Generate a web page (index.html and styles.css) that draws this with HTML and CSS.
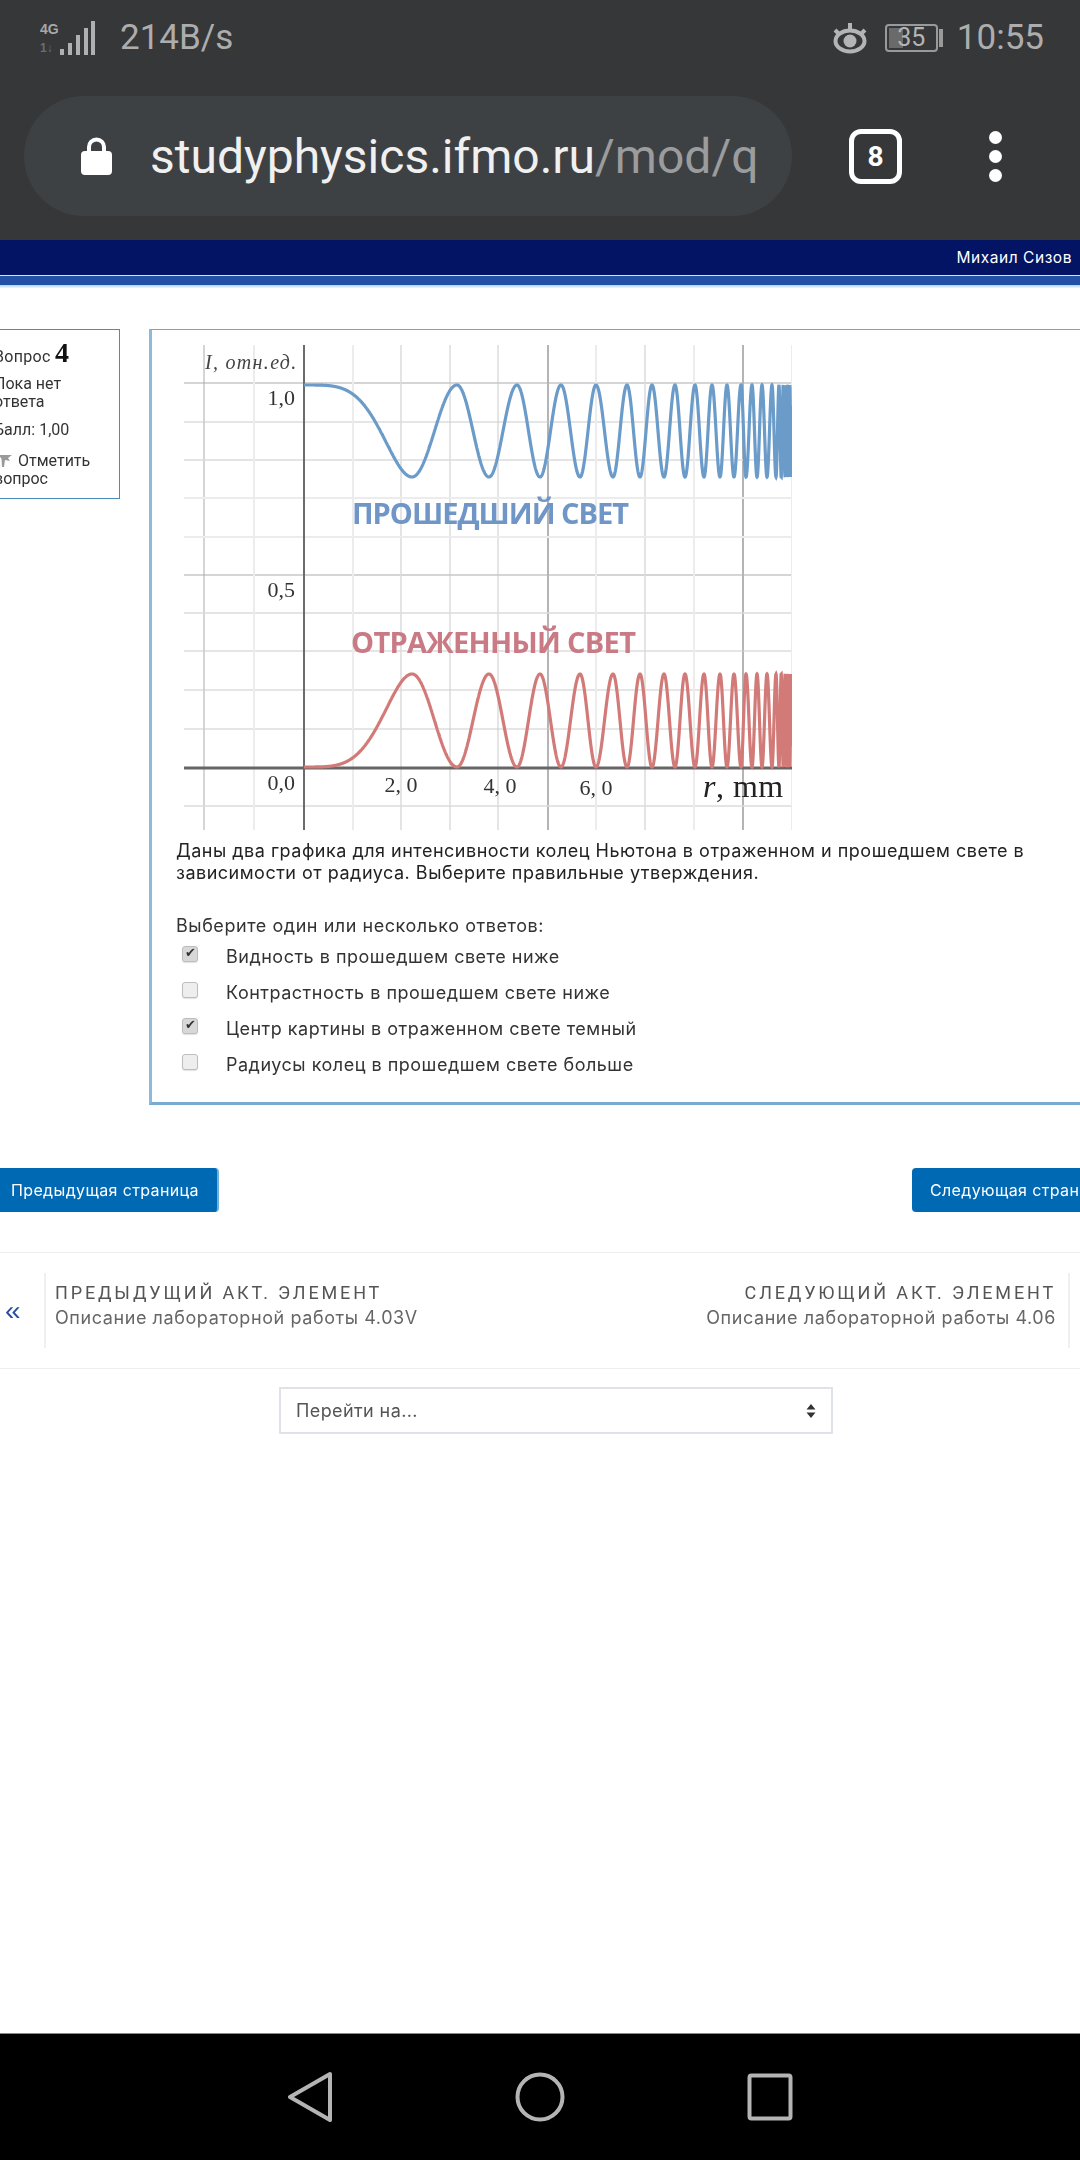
FILE: index.html
```html
<!DOCTYPE html>
<html lang="ru">
<head>
<meta charset="utf-8">
<title>Вопрос 4</title>
<link rel="stylesheet" href="styles.css">
</head>
<body>
<header class="chrome">
  <div class="status">
    <div class="status-left">
      <svg class="signal" viewBox="0 0 56 36" width="56" height="36">
        <text x="0" y="14" class="net">4G</text>
        <text x="0" y="32" class="net dim">1↓</text>
        <path class="bars" d="M20 29h4v6h-4zM28 23h4v12h-4zM36 15h4v20h-4zM44 8h4v27h-4zM51 1h4v34h-4z"/>
      </svg>
      <span class="speed">214B/s</span>
    </div>
    <div class="status-right">
      <svg class="eye" viewBox="0 0 38 32" width="38" height="32">
        <path class="eye-lash" d="M4 8l5 5M34 8l-5 5M19 1v7"/>
        <ellipse class="eye-ring" cx="19" cy="19" rx="14.5" ry="10.5"/>
        <circle class="eye-pupil" cx="19" cy="19" r="6.5"/>
      </svg>
      <div class="battery"><span class="battery-fill"></span><span class="battery-num">35</span></div>
      <span class="battery-nub"></span>
      <span class="clock">10:55</span>
    </div>
  </div>
  <div class="toolbar">
    <div class="omnibox">
      <svg class="lock" viewBox="0 0 31 38" width="31" height="38">
        <path class="lock-bow" d="M8 18V10a7.500 7.500 0 0 1 15 0v8"/>
        <rect class="lock-body" x="0" y="14" width="31" height="24" rx="4"/>
      </svg>
      <span class="url">studyphysics.ifmo.ru<span class="url-path">/mod/q</span></span>
    </div>
    <div class="tabs">8</div>
    <div class="menu-dots"><i></i><i></i><i></i></div>
  </div>
</header>

<div class="sitebar"><span class="username">Михаил Сизов</span></div>
<div class="sitebar-rule"></div>

<main class="page">
  <div class="layout">
    <aside class="qinfo">
      <h3 class="qno">Вопрос <b>4</b></h3>
      <div class="qstate">Пока нет ответа</div>
      <div class="qgrade">Балл: 1,00</div>
      <div class="qflag">
        <svg class="flag" viewBox="0 0 14 14" width="14" height="14"><path d="M0 1h13l-4 3 2 3-5-1-1 7H3L2.500 5z"/></svg>
        Отметить вопрос
      </div>
    </aside>
    <section class="qcontent">
      <svg class="chart" viewBox="184 345 608 485" width="608" height="485">
        <path class="g1" d="M184 383H792M184 575H792M204 345V830"/>
        <path class="g5" d="M548 345V830M743 345V830"/>
        <path class="g2" d="M184 422H792M184 651H792M184 690H792M184 729H792M450 345V830M498 345V830"/>
        <path class="g3" d="M184 460H792M184 613H792M184 806H792M401 345V830M645 345V830"/>
        <path class="g4" d="M184 498H792M184 537H792M254 345V830M353 345V830M596 345V830M694 345V830M792 345V830"/>
        <path class="axis-y" d="M304 345V830"/>
        <path class="axis-x" d="M184 768H792"/>
        <path id="curve-t" class="curve-t"/>
        <path id="curve-r" class="curve-r"/>
        <text class="tick" x="295" y="405" text-anchor="end">1,0</text>
        <text class="tick" x="295" y="597" text-anchor="end">0,5</text>
        <text class="tick" x="295" y="790" text-anchor="end">0,0</text>
        <text class="tick" x="401" y="792" text-anchor="middle">2, 0</text>
        <text class="tick" x="500" y="793" text-anchor="middle">4, 0</text>
        <text class="tick" x="596" y="795" text-anchor="middle">6, 0</text>
        <text class="ylab" x="205" y="369">I, отн.ед.</text>
        <text class="xlab" x="703" y="797"><tspan class="xlab-r">r</tspan>, mm</text>
        <text class="lab-t" x="352" y="524">ПРОШЕДШИЙ СВЕТ</text>
        <text class="lab-r" x="351" y="653">ОТРАЖЕННЫЙ СВЕТ</text>
      </svg>
      <p class="qtext">Даны два графика для интенсивности колец Ньютона в отраженном и прошедшем свете в зависимости от радиуса. Выберите правильные утверждения.</p>
      <p class="prompt">Выберите один или несколько ответов:</p>
      <ul class="answers">
        <li class="answer"><span class="cb on"></span>Видность в прошедшем свете ниже</li>
        <li class="answer"><span class="cb"></span>Контрастность в прошедшем свете ниже</li>
        <li class="answer"><span class="cb on"></span>Центр картины в отраженном свете темный</li>
        <li class="answer"><span class="cb"></span>Радиусы колец в прошедшем свете больше</li>
      </ul>
    </section>
  </div>

  <div class="pager">
    <a class="btn btn-prev">Предыдущая страница</a>
    <a class="btn btn-next">Следующая страница</a>
  </div>

  <nav class="activity">
    <div class="act-side">
      <span class="act-arrow">«</span>
      <div class="act-body">
        <div class="act-title">ПРЕДЫДУЩИЙ АКТ. ЭЛЕМЕНТ</div>
        <div class="act-name">Описание лабораторной работы 4.03V</div>
      </div>
    </div>
    <div class="act-side act-right">
      <div class="act-body">
        <div class="act-title">СЛЕДУЮЩИЙ АКТ. ЭЛЕМЕНТ</div>
        <div class="act-name">Описание лабораторной работы 4.06</div>
      </div>
    </div>
  </nav>

  <div class="jump">
    <span>Перейти на...</span>
    <svg class="updown" viewBox="0 0 10 14" width="10" height="14"><path d="M5 0l4.500 5.500h-9zM5 14L.5 8.500h9z"/></svg>
  </div>
</main>

<footer class="navbar">
  <svg class="nav-icon" viewBox="0 0 46 50" width="46" height="50"><path d="M43 2L3 25l40 23z"/></svg>
  <svg class="nav-icon" viewBox="0 0 50 50" width="50" height="50"><circle cx="25" cy="25" r="22.500"/></svg>
  <svg class="nav-icon" viewBox="0 0 46 48" width="46" height="48"><rect x="2.500" y="2.500" width="41" height="43" rx="2"/></svg>
</footer>
<script src="chart.js"></script>
</body>
</html>
```
FILE: styles.css
```css
* { box-sizing: border-box; }
html, body { margin: 0; padding: 0; }
body {
  width: 1080px; height: 2160px; overflow: hidden;
  display: flex; flex-direction: column;
  background: #fff; color: #222;
  font-family: Roboto, "Noto Sans", sans-serif;
}

/* browser chrome */
.chrome { height: 240px; background: #363739; flex: none; padding: 0 24px; }
.status { height: 96px; display: flex; justify-content: space-between; align-items: flex-start; padding-top: 18px; }
.status-left { display: flex; align-items: center; margin-left: 16px; gap: 24px; color: #adadad; }
.signal { display: block; }
.net { font: 700 14px "Liberation Sans", sans-serif; fill: #a8a8a8; }
.net.dim { fill: #6c6c6c; font-size: 12px; }
.bars { fill: #b0b0b0; }
.speed { font-size: 35px; line-height: 40px; }
.status-right { display: flex; align-items: center; margin-right: 12px; color: #adadad; }
.eye { margin-right: 16px; }
.eye-lash, .eye-ring { fill: none; stroke: #b4b4b4; stroke-width: 4; }
.eye-pupil { fill: #b4b4b4; }
.battery { position: relative; width: 53px; height: 28px; border: 2px solid #9a9a9a; border-radius: 4px; display: flex; align-items: center; justify-content: center; }
.battery-fill { position: absolute; left: 2px; top: 2px; bottom: 2px; width: 14px; background: #6a6a6a; }
.battery-num { position: relative; font-size: 25px; line-height: 24px; color: #b4b4b4; }
.battery-nub { width: 4px; height: 18px; background: #9a9a9a; margin: 0 14px 0 1px; }
.clock { font-size: 35px; line-height: 40px; }

.toolbar { display: flex; align-items: center; height: 120px; }
.omnibox { width: 768px; height: 120px; border-radius: 60px; background: #3e4143; display: flex; align-items: center; padding-left: 57px; gap: 38px; }
.lock-bow { fill: none; stroke: #fff; stroke-width: 4; }
.lock-body { fill: #fff; }
.url { font-size: 48px; line-height: 60px; padding-top: 2px; color: #f0f0f0; white-space: nowrap; }
.url-path { color: #9a9c9e; }
.tabs { width: 53px; height: 55px; margin-left: 57px; border: 5px solid #fff; border-radius: 12px; color: #fff; font-size: 28px; font-weight: 700; display: flex; align-items: center; justify-content: center; }
.menu-dots { margin-left: 87px; display: flex; flex-direction: column; gap: 6px; }
.menu-dots i { display: block; width: 13px; height: 13px; border-radius: 50%; background: #fff; }

/* site header */
.sitebar { height: 35px; flex: none; background: #021463; display: flex; justify-content: flex-end; align-items: center; padding-right: 8px; }
.username { color: #fff; font: 15.5px Inter, Roboto, sans-serif; letter-spacing: .55px; }
.sitebar-rule { height: 13px; flex: none; border-top: 1px solid #d8e4f4; background: linear-gradient(#2350a5 0 9px, #a9d4ef 9px, #eef7fb 12px); }

/* page */
.page { flex: 1; overflow: hidden; min-height: 0; padding-top: 41px; }
.layout { display: flex; align-items: flex-start; gap: 29px; margin-left: -20px; width: 1200px; filter: blur(.35px); }

.qinfo { width: 140px; height: 170px; border: 1px solid #4a8db8; padding: 7px 0 0 13px; font-size: 16px; line-height: 18px; color: #333; flex: none; }
.qno { margin: 0; font-size: 16px; font-weight: 400; line-height: 30px; letter-spacing: .3px; }
.qno b { font: 700 28px "Liberation Serif", serif; color: #111; }
.qstate { margin-top: 3px; width: 90px; }
.qgrade { margin-top: 10px; }
.qflag { margin-top: 13px; }
.flag { vertical-align: -2px; margin: 0 1px 0 5px; }
.flag path { fill: #9a9a9a; }

.qcontent { width: 1040px; height: 776px; border: 1px solid #6da8cf; border-left: 3px solid #8bbadd; border-bottom: 3px solid #78abd2; padding: 15px 0 0 24px; flex: none; }
.chart { display: block; margin-left: 8px; }
.g1, .g2, .g3, .g4, .g5, .axis-x, .axis-y, .curve-t, .curve-r { fill: none; }
.g1 { stroke: #ababab; stroke-width: 1; }
.g5 { stroke: #b4b4b4; stroke-width: 2; }
.g2 { stroke: #cbcbcb; stroke-width: 1; }
.g3 { stroke: #dcdcdc; stroke-width: 1.5; }
.g4 { stroke: #ececec; stroke-width: 2; }
.axis-y { stroke: #6b6b6b; stroke-width: 2; }
.axis-x { stroke: #666; stroke-width: 3; }
.curve-t { stroke: #6a9bc9; stroke-width: 3.2; }
.curve-r { stroke: #d27a78; stroke-width: 3.2; }
.tick { font: 22px "Liberation Serif", serif; fill: #333; }
.ylab { font: italic 20px "Liberation Serif", serif; fill: #444; letter-spacing: 1.3px; }
.xlab { font: 32px "Liberation Serif", serif; fill: #222; letter-spacing: .5px; }
.xlab-r { font-style: italic; }
.lab-t { font: 700 29px "Open Sans", sans-serif; fill: #6f96c6; letter-spacing: -1px; }
.lab-r { font: 700 29px "Open Sans", sans-serif; fill: #c97a84; letter-spacing: -.7px; }

.qtext { margin: 10px 0 0; width: 900px; font: 18px/22px Inter, Roboto, sans-serif; letter-spacing: .5px; color: #222; }
.prompt { margin: 31px 0 0; font: 18px/22px Inter, Roboto, sans-serif; letter-spacing: .55px; color: #333; }
.answers { list-style: none; margin: 6px 0 0; padding: 0; }
.answer { height: 36px; display: flex; align-items: flex-start; font: 18px/28px Inter, Roboto, sans-serif; letter-spacing: .5px; color: #333; }
.cb { width: 16px; height: 16px; flex: none; margin: 3px 28px 0 6px; border-radius: 3px; border: 1px solid #bdbdbd; background: #eee; box-shadow: 0 1px 1px #e2e2e2; position: relative; }
.cb.on { background: #d8d8d8; }
.cb.on::after { content: "✔"; position: absolute; left: 2px; top: -4px; font: 13px "DejaVu Sans", sans-serif; line-height: 20px; color: #333; }

.pager { display: flex; justify-content: space-between; margin: 63px 0 0 -20px; width: 1190px; filter: blur(.35px); }
.btn { height: 44px; border-radius: 4px; background: #0069b4; border-right: 2px solid #6db0dc; color: #fff; font: 16px/44px Inter, Roboto, sans-serif; letter-spacing: .36px; padding: 0 18px 0 31px; white-space: nowrap; }
.btn-next { padding-left: 18px; border-right: 0; width: 258px; overflow: hidden; }

.activity { margin-top: 40px; height: 117px; border-top: 1px solid #eee; border-bottom: 1px solid #eee; display: flex; justify-content: space-between; align-items: center; filter: blur(.35px); }
.act-side { display: flex; align-items: center; height: 75px; }
.act-arrow { width: 44px; padding-left: 5px; color: #2a4da0; font: 28px/1 "Liberation Sans", sans-serif; }
.act-body { height: 75px; padding: 8px 9px; border-left: 2px solid #f0f0f0; }
.act-right .act-body { border-left: 0; border-right: 2px solid #f0f0f0; padding-right: 12px; text-align: right; margin-right: 10px; }
.act-title { font-size: 18px; line-height: 24px; letter-spacing: 2.85px; color: #555; }
.act-name { font: 18px/25px Inter, Roboto, sans-serif; letter-spacing: .58px; color: #666; }

.jump { margin: 18px 0 0 279px; width: 554px; height: 47px; border: 2px solid #dfe2e6; display: flex; justify-content: space-between; align-items: center; padding: 0 15px; font: 18px Inter, Roboto, sans-serif; letter-spacing: .4px; color: #555; filter: blur(.35px); }
.updown path { fill: #333; }

.navbar { height: 127px; flex: none; background: #000; border-top: 1px solid #888; display: flex; justify-content: center; align-items: center; gap: 182px; }
.nav-icon { display: block; fill: none; stroke: #b4b4b4; stroke-width: 4; stroke-linejoin: round; }
```
FILE: chart.js
```js
// Extrema of the interference curves, measured along the x axis (page px).
var ext = [304,412,457,489,517,540,561,580,596,613,627,640,652,664,675,685,695,704,712,720,727,734,741,746,752,757,762,767,772,776,779];
for (var e = 779, s = 2.2; e < 792; s = Math.max(s * 0.92, 1)) { e += s; ext.push(e); }

function phaseAt(x) {
  if (x <= ext[1]) { var t = (x - 304) / (ext[1] - 304); return t * t; }
  for (var i = 1; i < ext.length - 1; i++) {
    if (x <= ext[i + 1]) return i + (x - ext[i]) / (ext[i + 1] - ext[i]);
  }
  return ext.length - 1;
}
function build(fn) {
  var d = "";
  for (var x = 304; x <= 792; x += 0.125) {
    var s = Math.sin(phaseAt(x) * Math.PI / 2);
    d += (d ? "L" : "M") + x.toFixed(2) + " " + fn(s * s).toFixed(2);
  }
  return d;
}
document.getElementById("curve-t").setAttribute("d", build(function (v) { return 385 + 92 * v; }));
document.getElementById("curve-r").setAttribute("d", build(function (v) { return 767 - 93 * v; }));
```
